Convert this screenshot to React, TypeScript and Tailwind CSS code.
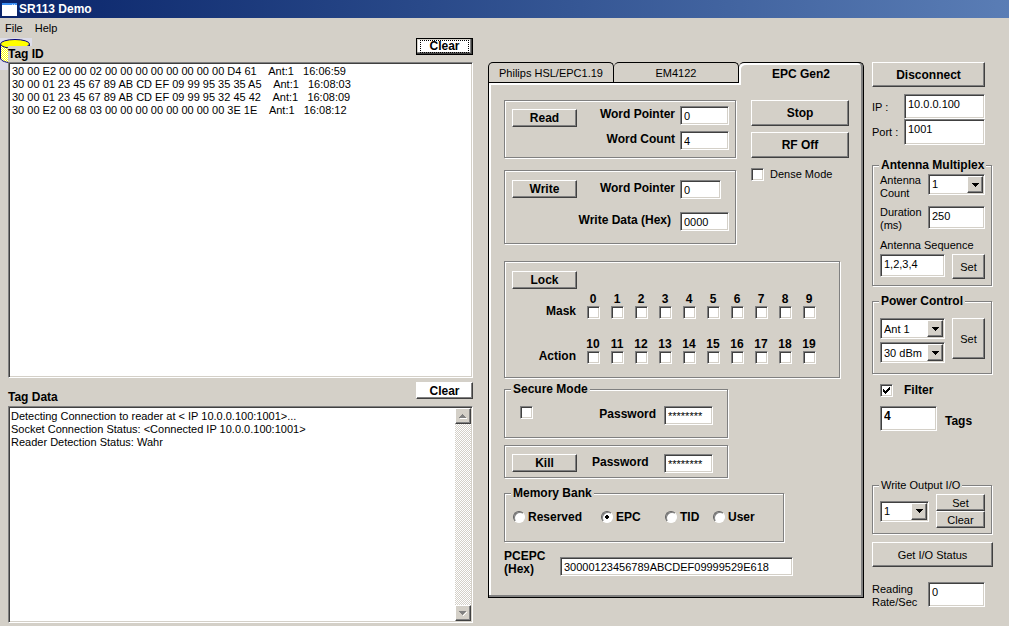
import type { ReactNode } from "react";
import clsx from "clsx";

const sunken =
  "border border-t-[#808080] border-l-[#808080] border-b-white border-r-white bg-white shadow-[inset_1px_1px_0_#404040,inset_-1px_-1px_0_#d4d0c8]";
const raised =
  "border border-t-white border-l-white border-b-[#404040] border-r-[#404040] shadow-[inset_-1px_-1px_0_#808080]";
const etched = "border border-[#808080] shadow-[1px_1px_0_#fff,inset_1px_1px_0_#fff]";
const bold = "text-[12px] font-bold leading-4";

const tagRows = [
  "30 00 E2 00 00 02 00 00 00 00 00 00 00 00 D4 61    Ant:1   16:06:59",
  "30 00 01 23 45 67 89 AB CD EF 09 99 95 35 35 A5    Ant:1   16:08:03",
  "30 00 01 23 45 67 89 AB CD EF 09 99 95 32 45 42    Ant:1   16:08:09",
  "30 00 E2 00 68 03 00 00 00 00 00 00 00 00 3E 1E    Ant:1   16:08:12",
];

const tagLog = `Detecting Connection to reader at < IP 10.0.0.100:1001>...
Socket Connection Status: <Connected IP 10.0.0.100:1001>
Reader Detection Status: Wahr`;

const banks = ["Reserved", "EPC", "TID", "User"];

function Button({ className, children }: { className?: string; children: ReactNode }) {
  return (
    <button type="button" className={clsx("flex items-center justify-center", raised, className)}>
      {children}
    </button>
  );
}

function TextBox({ id, value, className, label }: { id?: string; value: string; className?: string; label?: string }) {
  return (
    <input
      id={id}
      type="text"
      aria-label={label}
      defaultValue={value}
      className={clsx("block min-w-0 px-[3px] outline-none", sunken, className)}
    />
  );
}

function CheckBox({ id, label, checked }: { id?: string; label?: string; checked?: boolean }) {
  return (
    <span className="relative block size-[13px] shrink-0">
      <input
        id={id}
        type="checkbox"
        aria-label={label}
        defaultChecked={checked}
        className={clsx("peer block size-[13px] appearance-none", sunken)}
      />
      <svg
        viewBox="0 0 13 13"
        className="pointer-events-none absolute inset-0 hidden peer-checked:block"
        shapeRendering="crispEdges"
      >
        <path d="M3 5h1v1h1v1h1v-1h1v-1h1v-1h1v-1h1v3h-1v1h-1v1h-1v1h-1v1h-1v-1h-1v-1h-1z" />
      </svg>
    </span>
  );
}

function Select({ id, value, className, label }: { id?: string; value: string; className?: string; label?: string }) {
  return (
    <span className={clsx("relative block h-[21px]", className)}>
      <select id={id} aria-label={label} className={clsx("block h-full w-full appearance-none pl-[3px]", sunken)}>
        <option>{value}</option>
      </select>
      <span
        className={clsx(
          "pointer-events-none absolute inset-y-[2px] right-[2px] flex w-4 items-center justify-center bg-[#d4d0c8]",
          raised,
        )}
      >
        <svg width="7" height="4" viewBox="0 0 7 4" shapeRendering="crispEdges">
          <path d="M0 0h7v1h-1v1h-1v1h-1v1h-1v-1h-1v-1h-1v-1h-1z" />
        </svg>
      </span>
    </span>
  );
}

function Group({ title, plain, className, children }: { title: string; plain?: boolean; className?: string; children: ReactNode }) {
  return (
    <fieldset className={clsx("min-w-0", etched, className)}>
      <legend
        className={clsx(
          "ml-[6px] whitespace-nowrap bg-[#d4d0c8] px-[2px] leading-[14px]",
          !plain && "text-[12px] font-bold",
        )}
      >
        {title}
      </legend>
      {children}
    </fieldset>
  );
}

function BitRow({ name, start }: { name: string; start: number }) {
  return (
    <div className="flex items-end">
      <span className={clsx("w-[71px] text-right", bold)}>{name}</span>
      <div className="ml-[5px] grid grid-cols-[repeat(10,24px)]">
        {Array.from({ length: 10 }, (_, i) => start + i).map((bit) => (
          <label key={bit} className="flex flex-col items-center text-[12px] font-bold leading-[14px]">
            {bit}
            <CheckBox />
          </label>
        ))}
      </div>
    </div>
  );
}

function TagPanels() {
  return (
    <section className="relative flex min-w-0 flex-1 flex-col">
      <div className="flex h-6 items-start justify-between">
        <h2 className={clsx("mt-2 w-24 bg-[#d4d0c8]", bold)}>Tag ID</h2>
        <button
          type="button"
          className="h-[17px] w-[57px] border border-black bg-white p-px text-[12px] font-bold leading-[11px] shadow-[inset_-1px_-1px_0_#404040,inset_-2px_-2px_0_#808080,inset_1px_1px_0_#d4d0c8]"
        >
          <span className="mx-[2px] block border border-dotted border-black">Clear</span>
        </button>
      </div>
      <ul className={clsx("grow basis-[316px] whitespace-pre px-[3px] pt-[2px] leading-[13px]", sunken)}>
        {tagRows.map((row) => (
          <li key={row}>{row}</li>
        ))}
      </ul>
      <div className="flex h-7 items-start justify-between">
        <label htmlFor="tag-data" className={clsx("mt-[11px]", bold)}>
          Tag Data
        </label>
        <Button className={clsx("mt-1 h-[17px] w-[57px] bg-white", bold)}>Clear</Button>
      </div>
      <div className={clsx("flex grow basis-[217px] p-px", sunken)}>
        <textarea
          id="tag-data"
          defaultValue={tagLog}
          className="min-w-0 flex-1 resize-none overflow-hidden px-px pt-[2px] leading-[13px] outline-none"
        />
        <div className="flex w-4 flex-col justify-between bg-[repeating-conic-gradient(#fff_0_25%,#d4d0c8_0_50%)] bg-[length:2px_2px]">
          <Button className="h-4 w-4 bg-[#d4d0c8]">
            <svg width="8" height="5" viewBox="0 0 8 5" shapeRendering="crispEdges">
              <path fill="#fff" d="M1 4h7v1h-7z" />
              <path fill="#808080" d="M3 0h1v1h1v1h1v1h1v1h-7v-1h1v-1h1v-1h1z" />
            </svg>
          </Button>
          <Button className="h-4 w-4 bg-[#d4d0c8]">
            <svg width="8" height="5" viewBox="0 0 8 5" shapeRendering="crispEdges">
              <path fill="#fff" d="M7 1h1v1h-1v1h-1v1h-1v1h-1v-1h1z" />
              <path fill="#808080" d="M0 0h7v1h-1v1h-1v1h-1v1h-1v-1h-1v-1h-1v-1h-1z" />
            </svg>
          </Button>
        </div>
      </div>
    </section>
  );
}

function ReaderTabs() {
  return (
    <section className="mt-6 w-[376px] shrink-0">
      <div role="tablist" className="flex h-5">
        <button type="button" role="tab" className="flex-1 rounded-t-[5px] border border-b-0 border-black">
          Philips HSL/EPC1.19
        </button>
        <button type="button" role="tab" className="flex-1 rounded-t-[5px] border border-b-0 border-l-0 border-black">
          EM4122
        </button>
        <button
          type="button"
          role="tab"
          aria-selected="true"
          className={clsx(
            "z-10 h-[23px] flex-1 rounded-t-[5px] border-t border-r border-black bg-[#d4d0c8] shadow-[inset_-2px_0_0_#808080,inset_2px_2px_0_#fff]",
            bold,
          )}
        >
          EPC Gen2
        </button>
      </div>

      <div className="border border-black pt-[17px] pb-[21px] pl-[15px] shadow-[inset_-2px_-2px_0_#808080,inset_2px_2px_0_#fff]">
        <div className="flex">
          <div className="w-[232px]">
            <div className={clsx("flex h-[58px] items-start pt-[5px] pr-[6px] pl-[7px]", etched)}>
              <Button className={clsx("mt-[3px] h-[18px] w-[65px]", bold)}>Read</Button>
              <div className="grid flex-1 grid-cols-[1fr_49px] gap-x-[5px] gap-y-[6px]">
                <label htmlFor="read-pointer" className={clsx("text-right", bold)}>Word Pointer</label>
                <TextBox id="read-pointer" value="0" className="h-[19px]" />
                <label htmlFor="read-count" className={clsx("text-right", bold)}>Word Count</label>
                <TextBox id="read-count" value="4" className="h-[19px]" />
              </div>
            </div>
            <div className={clsx("mt-3 flex h-[74px] items-start pt-[9px] pr-[6px] pl-[7px]", etched)}>
              <Button className={clsx("h-[18px] w-[65px] shrink-0", bold)}>Write</Button>
              <div className="-ml-2 grid flex-1 grid-cols-[1fr_49px] gap-x-[5px] gap-y-[13px]">
                <label htmlFor="write-pointer" className={clsx("text-right", bold)}>Word Pointer</label>
                <TextBox id="write-pointer" value="0" className="h-[19px] w-[41px]" />
                <label htmlFor="write-data" className={clsx("pr-1 text-right", bold)}>Write Data (Hex)</label>
                <TextBox id="write-data" value="0000" className="h-[19px]" />
              </div>
            </div>
          </div>
          <div className="ml-[15px]">
            <Button className={clsx("h-[26px] w-[98px]", bold)}>Stop</Button>
            <Button className={clsx("mt-[6px] h-[26px] w-[98px]", bold)}>RF Off</Button>
            <label className="mt-[9px] flex items-center gap-[6px]">
              <CheckBox />
              Dense Mode
            </label>
          </div>
        </div>

        <div className={clsx("mt-[17px] h-[117px] w-[336px] pt-[9px]", etched)}>
          <Button className={clsx("mb-[3px] ml-[7px] h-[18px] w-[65px]", bold)}>Lock</Button>
          <BitRow name="Mask" start={0} />
          <div className="mt-[18px]">
            <BitRow name="Action" start={10} />
          </div>
        </div>

        <Group title="Secure Mode" className="mt-1 h-[56px] w-[224px]">
          <div className="flex items-start pt-[10px] pl-[15px]">
            <CheckBox label="Secure Mode" />
            <label htmlFor="secure-password" className={clsx("ml-auto", bold)}>Password</label>
            <TextBox id="secure-password" value="********" className="mr-[14px] ml-[8px] h-[19px] w-[49px]" />
          </div>
        </Group>

        <div className={clsx("mt-[7px] flex h-[33px] w-[224px] items-start pt-2 pl-[7px]", etched)}>
          <Button className={clsx("h-[18px] w-[65px]", bold)}>Kill</Button>
          <label htmlFor="kill-password" className={clsx("ml-[15px]", bold)}>Password</label>
          <TextBox id="kill-password" value="********" className="mr-[14px] ml-auto h-[19px] w-[49px]" />
        </div>

        <Group title="Memory Bank" className="mt-2 h-[56px] w-[280px]">
          <div className="grid grid-cols-[88px_64px_48px_auto] pt-[9px] pl-2">
            {banks.map((bank) => (
              <label key={bank} className={clsx("flex items-center gap-[3px]", bold)}>
                <input
                  type="radio"
                  name="bank"
                  defaultChecked={bank === "EPC"}
                  className="size-3 appearance-none rounded-full border border-t-[#606060] border-r-white border-b-white border-l-[#606060] bg-white shadow-[inset_1px_1px_0_#808080] checked:bg-[radial-gradient(#000_2px,#fff_2px)]"
                />
                {bank}
              </label>
            ))}
          </div>
        </Group>

        <div className="mt-2 flex items-end">
          <label htmlFor="pcepc" className="w-14 text-[12px] font-bold leading-[13px]">
            PCEPC (Hex)
          </label>
          <TextBox id="pcepc" value="30000123456789ABCDEF09999529E618" className="h-[19px] w-[233px]" />
        </div>
      </div>
    </section>
  );
}

function ReaderSettings() {
  return (
    <aside className="mt-6 ml-2 w-[121px] shrink-0">
      <Button className={clsx("h-[25px] w-[113px]", bold)}>Disconnect</Button>
      <div className="mt-[7px] grid grid-cols-[32px_81px] items-center">
        <label htmlFor="ip">IP :</label>
        <TextBox id="ip" value="10.0.0.100" className="h-[25px] pb-[5px]" />
        <label htmlFor="port">Port :</label>
        <TextBox id="port" value="1001" className="h-[26px] pb-[7px]" />
      </div>

      <Group title="Antenna Multiplex" className="mt-[13px] h-[128px] w-[120px]">
        <div className="pt-[2px] pr-[6px] pl-[7px]">
          <div className="grid grid-cols-[48px_57px] gap-y-[6px] leading-[13px]">
            <label htmlFor="antenna-count">Antenna Count</label>
            <Select id="antenna-count" value="1" />
            <label htmlFor="duration">Duration (ms)</label>
            <TextBox id="duration" value="250" className="h-[23px] pb-[3px]" />
          </div>
          <label htmlFor="sequence" className="mt-[7px] block whitespace-nowrap leading-[13px]">
            Antenna Sequence
          </label>
          <div className="mt-[2px] flex justify-between">
            <TextBox id="sequence" value="1,2,3,4" className="h-[23px] w-[65px] pb-[3px]" />
            <Button className="h-[25px] w-[33px]">Set</Button>
          </div>
        </div>
      </Group>

      <Group title="Power Control" className="mt-2 h-[80px] w-[120px]">
        <div className="flex justify-between pt-[10px] pr-[6px] pl-[7px]">
          <div className="flex flex-col gap-[3px]">
            <Select label="Antenna" value="Ant 1" className="w-[65px]" />
            <Select label="Power" value="30 dBm" className="w-[65px]" />
          </div>
          <Button className="h-[41px] w-[33px]">Set</Button>
        </div>
      </Group>

      <label className={clsx("mt-2 ml-2 flex items-center gap-[11px]", bold)}>
        <CheckBox checked />
        Filter
      </label>
      <div className="mt-2 ml-2 flex items-center gap-2">
        <TextBox id="tags" value="4" className="h-[25px] w-[57px] pb-[5px] text-[12px] font-bold" />
        <label htmlFor="tags" className={clsx("mt-1", bold)}>Tags</label>
      </div>

      <Group title="Write Output I/O" plain className="mt-[47px] h-[56px] w-[120px]">
        <div className="flex items-center justify-between pt-[2px] pr-[6px] pl-[7px]">
          <Select label="Output" value="1" className="w-[49px]" />
          <div>
            <Button className="h-[17px] w-[49px]">Set</Button>
            <Button className="h-[17px] w-[49px]">Clear</Button>
          </div>
        </div>
      </Group>

      <Button className="mt-2 h-[25px] w-full">Get I/O Status</Button>
      <div className="mt-[15px] flex">
        <label htmlFor="rate" className="w-14 pt-px leading-[13px]">
          Reading Rate/Sec
        </label>
        <TextBox id="rate" value="0" className="h-[25px] w-[57px] pb-[5px]" />
      </div>
    </aside>
  );
}

export default function App() {
  return (
    <div className="flex min-h-screen flex-col bg-[#d4d0c8] font-['Liberation_Sans',Arial,sans-serif] text-[11px] leading-[14px] text-black">
      <header className="flex h-[18px] items-center gap-[2px] bg-linear-to-r from-[#0a246a] to-[#5a7db5] pl-[2px] text-white">
        <svg width="15" height="13" viewBox="0 0 15 13" shapeRendering="crispEdges">
          <path fill="#3a8cf0" d="M0 0h15v13h-15z" />
          <path fill="#fff" d="M0 2h15v11h-15z" />
          <path fill="#a8d0ff" d="M10 1h1v1h-1zM12 1h1v1h-1z" />
        </svg>
        <h1 className={bold}>SR113 Demo</h1>
      </header>
      <nav className="flex h-5 items-center gap-3 pl-[5px]">
        <button type="button">File</button>
        <button type="button">Help</button>
      </nav>
      <main className="relative flex flex-1 pr-4 pb-[3px] pl-2">
        <svg width="32" height="32" viewBox="0 0 32 32" className="absolute top-0 left-0">
          <defs>
            <pattern id="dither" width="2" height="2" patternUnits="userSpaceOnUse">
              <path fill="#fff" d="M0 0h2v2h-2z" />
              <path fill="#ff0" d="M0 0h1v1h-1zM1 1h1v1h-1z" />
            </pattern>
          </defs>
          <path fill="#dcdce8" d="M0 0h32v32h-32z" />
          <path fill="url(#dither)" stroke="#000080" d="M.5 6v14c0 3 6 5 14.500 5s14.500-2 14.500-5v-14" />
          <ellipse cx="15" cy="6" rx="14.500" ry="4.500" fill="#ff0" stroke="#000080" />
        </svg>
        <TagPanels />
        <div className="w-[15px] shrink-0" />
        <ReaderTabs />
        <ReaderSettings />
      </main>
    </div>
  );
}
